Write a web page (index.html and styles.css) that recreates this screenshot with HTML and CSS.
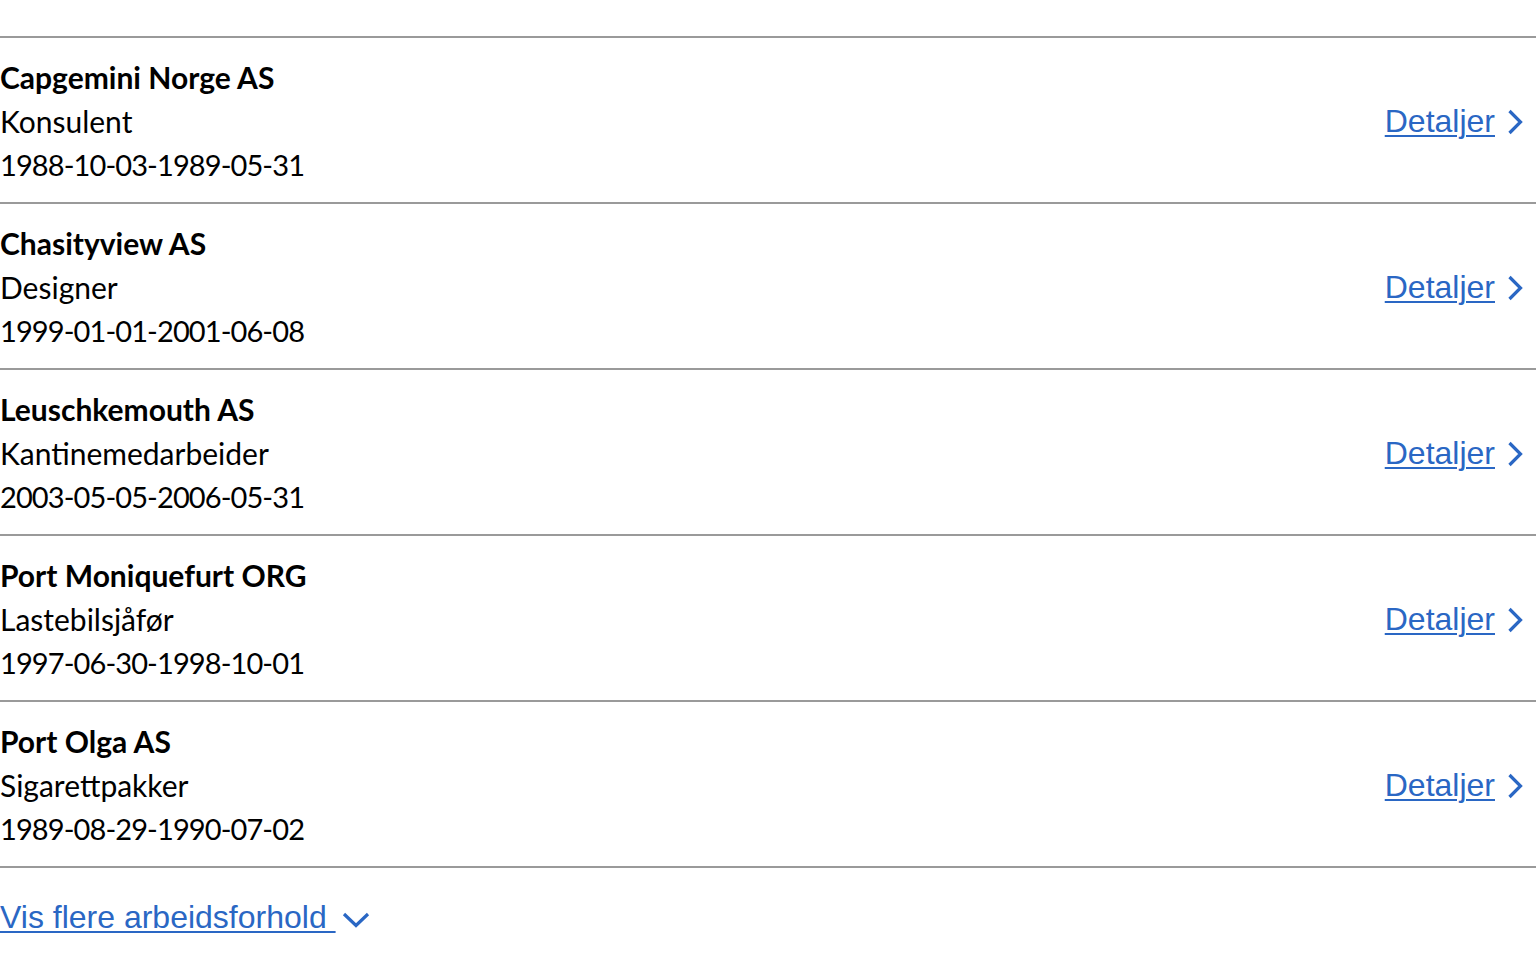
FILE: index.html
```html
<!DOCTYPE html>
<html lang="no">
<head>
<meta charset="utf-8">
<title>Arbeidsforhold</title>
<link rel="stylesheet" href="styles.css">
</head>
<body>
<main class="page">
  <ul class="jobs">
    <li class="job">
      <div class="job-info">
        <div class="employer">Capgemini Norge AS</div>
        <div class="line">Konsulent</div>
        <div class="line period">1988-10-03-1989-05-31</div>
      </div>
      <a class="details" href="#"><span class="details-text">Detaljer</span><svg class="chev-right" viewBox="0 0 16 26" width="16" height="26"><path d="M2.5 2 L13.5 13 L2.5 24" fill="none" stroke="currentColor" stroke-width="3.2"/></svg></a>
    </li>
    <li class="job">
      <div class="job-info">
        <div class="employer">Chasityview AS</div>
        <div class="line">Designer</div>
        <div class="line period">1999-01-01-2001-06-08</div>
      </div>
      <a class="details" href="#"><span class="details-text">Detaljer</span><svg class="chev-right" viewBox="0 0 16 26" width="16" height="26"><path d="M2.5 2 L13.5 13 L2.5 24" fill="none" stroke="currentColor" stroke-width="3.2"/></svg></a>
    </li>
    <li class="job">
      <div class="job-info">
        <div class="employer">Leuschkemouth AS</div>
        <div class="line">Kantinemedarbeider</div>
        <div class="line period">2003-05-05-2006-05-31</div>
      </div>
      <a class="details" href="#"><span class="details-text">Detaljer</span><svg class="chev-right" viewBox="0 0 16 26" width="16" height="26"><path d="M2.5 2 L13.5 13 L2.5 24" fill="none" stroke="currentColor" stroke-width="3.2"/></svg></a>
    </li>
    <li class="job">
      <div class="job-info">
        <div class="employer">Port Moniquefurt ORG</div>
        <div class="line">Lastebilsjåfør</div>
        <div class="line period">1997-06-30-1998-10-01</div>
      </div>
      <a class="details" href="#"><span class="details-text">Detaljer</span><svg class="chev-right" viewBox="0 0 16 26" width="16" height="26"><path d="M2.5 2 L13.5 13 L2.5 24" fill="none" stroke="currentColor" stroke-width="3.2"/></svg></a>
    </li>
    <li class="job">
      <div class="job-info">
        <div class="employer">Port Olga AS</div>
        <div class="line">Sigarettpakker</div>
        <div class="line period">1989-08-29-1990-07-02</div>
      </div>
      <a class="details" href="#"><span class="details-text">Detaljer</span><svg class="chev-right" viewBox="0 0 16 26" width="16" height="26"><path d="M2.5 2 L13.5 13 L2.5 24" fill="none" stroke="currentColor" stroke-width="3.2"/></svg></a>
    </li>
  </ul>
  <a class="more" href="#"><span class="more-text">Vis flere arbeidsforhold&nbsp;</span><svg class="chev-down" viewBox="0 0 28 16" width="28" height="16"><path d="M2 2 L14 13.5 L26 2" fill="none" stroke="currentColor" stroke-width="3.2"/></svg></a>
</main>
</body>
</html>
```

FILE: styles.css
```css
html, body {
  margin: 0;
  padding: 0;
  background: #ffffff;
}

.page {
  width: 1536px;
  padding-top: 36px;
  font-family: "Lato", "Open Sans", sans-serif;
  color: #000000;
}

.jobs {
  list-style: none;
  margin: 0;
  padding: 0;
  border-top: 2px solid #9a9a9a;
}

.job {
  display: flex;
  align-items: center;
  justify-content: space-between;
  padding: 17px 0 15px 0;
  border-bottom: 2px solid #9a9a9a;
}

.job-info {
  font-size: 30px;
  line-height: 44px;
}

.employer {
  font-weight: 700;
}

.period {
  font-size: 29px;
  letter-spacing: -0.9px;
}

.details {
  display: flex;
  align-items: center;
  gap: 12px;
  color: #2a67c4;
  font-family: "Liberation Sans", Arial, sans-serif;
  font-size: 32px;
  line-height: 40px;
  text-decoration: none;
  margin-right: 13px;
}

.details-text {
  text-decoration: underline;
  text-decoration-thickness: 2px;
  text-underline-offset: 3px;
}

.chev-right {
  display: block;
  margin-top: 2px;
}

.more {
  display: inline-flex;
  align-items: center;
  margin-top: 29px;
  color: #2a67c4;
  font-family: "Liberation Sans", Arial, sans-serif;
  font-size: 32px;
  line-height: 40px;
  text-decoration: none;
}

.more-text {
  text-decoration: underline;
  text-decoration-thickness: 2px;
  text-underline-offset: 3px;
}

.chev-down {
  display: block;
  margin-left: 6px;
  margin-top: 6px;
}
```
